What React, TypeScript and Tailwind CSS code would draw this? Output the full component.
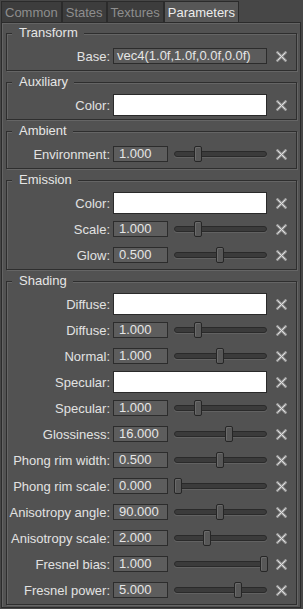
type Row = {
  label: string;
  kind: "text" | "color" | "num";
  value?: string;
  pos?: number;
};

type Group = { title: string; rows: Row[] };

const groups: Group[] = [
  {
    title: "Transform",
    rows: [{ label: "Base", kind: "text", value: "vec4(1.0f,1.0f,0.0f,0.0f)" }],
  },
  { title: "Auxiliary", rows: [{ label: "Color", kind: "color" }] },
  {
    title: "Ambient",
    rows: [{ label: "Environment", kind: "num", value: "1.000", pos: 20 }],
  },
  {
    title: "Emission",
    rows: [
      { label: "Color", kind: "color" },
      { label: "Scale", kind: "num", value: "1.000", pos: 20 },
      { label: "Glow", kind: "num", value: "0.500", pos: 42 },
    ],
  },
  {
    title: "Shading",
    rows: [
      { label: "Diffuse", kind: "color" },
      { label: "Diffuse", kind: "num", value: "1.000", pos: 20 },
      { label: "Normal", kind: "num", value: "1.000", pos: 42 },
      { label: "Specular", kind: "color" },
      { label: "Specular", kind: "num", value: "1.000", pos: 20 },
      { label: "Glossiness", kind: "num", value: "16.000", pos: 51 },
      { label: "Phong rim width", kind: "num", value: "0.500", pos: 42 },
      { label: "Phong rim scale", kind: "num", value: "0.000", pos: 0 },
      { label: "Anisotropy angle", kind: "num", value: "90.000", pos: 42 },
      { label: "Anisotropy scale", kind: "num", value: "2.000", pos: 29 },
      { label: "Fresnel bias", kind: "num", value: "1.000", pos: 86 },
      { label: "Fresnel power", kind: "num", value: "5.000", pos: 60 },
    ],
  },
];

const tabs = ["Common", "States", "Textures", "Parameters"];

// small grey "clear" cross next to each field
const ClearIcon = () => (
  <svg width="11" height="11" viewBox="0 0 11 11">
    <path
      d="M1.5 1.5 L9.5 9.5 M9.5 1.5 L1.5 9.5"
      stroke="#9c9c9c"
      strokeWidth="2.6"
      strokeLinecap="square"
    />
    <path d="M1.5 1.5 L9.5 9.5 M9.5 1.5 L1.5 9.5" stroke="#e4e4e4" strokeWidth="0.9" />
  </svg>
);

const Slider = ({ pos }: { pos: number }) => (
  <div className="relative ml-[6px] flex h-[16px] w-[93px] items-center">
    <div className="h-[6px] w-full rounded-[3px] border border-[#2a2a2a] bg-[#3b3b3b] shadow-[0_1px_0_#626262]" />
    <div
      className="absolute top-0 h-[16px] w-[8px] rounded-[2px] border border-[#262626] bg-[#575757] shadow-[inset_1px_1px_0_#6a6a6a]"
      style={{ left: pos }}
    />
  </div>
);

const FieldRow = ({ row }: { row: Row }) => (
  <div className="flex h-[22px] items-center">
    <span className="w-[103px] shrink-0 text-right leading-[15px] text-[#e2e2e2]">
      {row.label}:
    </span>
    <div className="ml-[3px] flex h-full w-[154px] items-center">
      {row.kind === "color" && (
        <div className="h-[22px] w-full border border-[#2a2a2a] bg-white" />
      )}
      {row.kind === "text" && (
        <div className="h-[16px] w-full border border-[#2c2c2c] bg-[#5b5b5b] pl-[3px] leading-[14px] text-[#e6e6e6]">
          {row.value}
        </div>
      )}
      {row.kind === "num" && (
        <>
          <div className="h-[16px] w-[55px] shrink-0 overflow-hidden border border-[#2c2c2c] bg-[#5d5d5d] pl-[5px] leading-[14px] text-[#e6e6e6]">
            {row.value}
          </div>
          <Slider pos={row.pos ?? 0} />
        </>
      )}
    </div>
    <div className="flex flex-1 justify-center">
      <ClearIcon />
    </div>
  </div>
);

export default function App() {
  return (
    <div
      className="h-[609px] w-[303px] overflow-hidden bg-[#474747] text-[13px]"
      style={{ fontFamily: '"Liberation Sans", Arial, sans-serif' }}
    >
      <div className="ml-[1px] flex pt-[1px]">
        {tabs.map((t) => {
          const active = t === "Parameters";
          return (
            <div
              key={t}
              className={`h-[21px] border border-b-0 border-[#2b2b2b] px-[3px] pt-[3px] leading-[15px] ${
                active ? "bg-[#575757] text-[#ececec]" : "bg-[#3d3d3d] text-[#8e8e8e]"
              }`}
            >
              {t}
            </div>
          );
        })}
      </div>
      <div className="ml-[1px] flex w-[300px] flex-col gap-[3px] border border-[#2b2b2b] bg-[#525252] pb-[2px] pl-[4px] pt-[2px] shadow-[inset_1px_1px_0_#646464]">
        {groups.map((g) => (
          <fieldset
            key={g.title}
            className="w-[291px] border border-[#2e2e2e] pb-[3px] shadow-[inset_1px_1px_0_#656565,1px_1px_0_#656565]"
          >
            <legend className="ml-[5px] bg-[#525252] pl-[7px] pr-[6px] leading-[16px] text-[#e6e6e6]">
              {g.title}
            </legend>
            <div className="flex flex-col gap-[4px] pt-[4px]">
              {g.rows.map((r, i) => (
                <FieldRow key={i} row={r} />
              ))}
            </div>
          </fieldset>
        ))}
      </div>
    </div>
  );
}
